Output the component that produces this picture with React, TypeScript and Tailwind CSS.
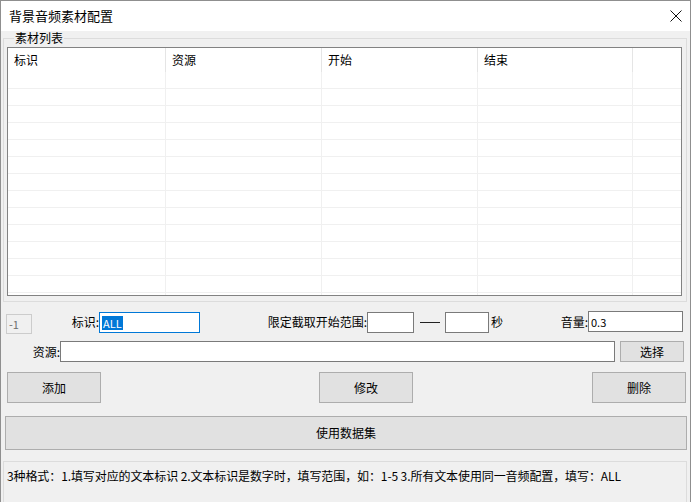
import React from "react";

const COLS = ["标识", "资源", "开始", "结束", ""];
const ROW_COUNT = 14;

function Btn({ label, className }: { label: string; className: string }) {
  return (
    <button
      type="button"
      className={`flex items-center justify-center border border-[#adadad] bg-[#e1e1e1] text-[12px] leading-[14px] text-black ${className}`}
    >
      {label}
    </button>
  );
}

function Box({ className, children }: { className: string; children?: React.ReactNode }) {
  return (
    <div className={`flex items-center border bg-white text-[11px] leading-[14px] ${className}`}>
      {children}
    </div>
  );
}

function MaterialTable() {
  return (
    <div className="mt-[2px] h-[249px] w-[675px] overflow-hidden border border-[#828282] bg-white">
      <div className="grid h-[24px] grid-cols-[158px_156px_156px_155px_1fr]">
        {COLS.map((c, i) => (
          <div
            key={i}
            className={`flex items-center pl-[6px] text-[12px] leading-[14px] ${i < 4 ? "border-r border-[#e5e5e5]" : ""}`}
          >
            {c}
          </div>
        ))}
      </div>
      {Array.from({ length: ROW_COUNT }).map((_, r) => (
        <div key={r} className="grid h-[17px] grid-cols-[158px_156px_156px_155px_1fr] border-b border-[#f0f0f0]">
          {COLS.map((_, i) => (
            <div key={i} className={i < 4 ? "border-r border-[#f0f0f0]" : ""} />
          ))}
        </div>
      ))}
    </div>
  );
}

export default function App() {
  return (
    <div className="flex h-[502px] w-[691px] flex-col overflow-hidden border-x border-t border-[#8f8f8f] font-['Noto_Sans_CJK_SC',sans-serif] text-black">
      {/* title bar */}
      <div className="flex h-[30px] shrink-0 items-center justify-between bg-white pl-[8px] pr-[8px]">
        <span className="text-[13px] leading-[16px]">背景音频素材配置</span>
        <svg width="12" height="12" viewBox="0 0 12 12">
          <path d="M0.5 0.5 L11.5 11.5 M11.5 0.5 L0.5 11.5" stroke="#111" strokeWidth="1" fill="none" />
        </svg>
      </div>

      <div className="flex flex-1 flex-col bg-[#f0f0f0]">
        {/* group box */}
        <fieldset className="ml-[2px] w-[684px] border border-[#dcdcdc] pb-[5px] pl-[3px]">
          <legend className="ml-[7px] px-[1px] text-[12px] leading-[14px]">素材列表</legend>
          <MaterialTable />
        </fieldset>

        {/* row 1 */}
        <div className="mt-[9px] flex h-[22px] items-start">
          <div className="ml-[5px] mt-[3px] flex h-[20px] w-[26px] items-center border border-[#cccccc] bg-[#f0f0f0] pl-[2px] text-[11px] leading-[14px] text-[#6d6d6d]">
            -1
          </div>
          <div className="flex h-[22px] w-[67px] items-center justify-end text-[12px] leading-[14px]">标识:</div>
          <Box className="mt-[1px] h-[21px] w-[101px] border-[#0078d7] pl-[2px]">
            <span className="bg-[#0078d7] px-[1px] text-white">ALL</span>
          </Box>
          <div className="flex h-[22px] w-[167px] items-center justify-end text-[12px] leading-[14px]">
            限定截取开始范围:
          </div>
          <Box className="mt-[1px] h-[21px] w-[47px] border-[#7a7a7a]" />
          <div className="flex h-[22px] w-[31px] items-center justify-center">
            <div className="h-[1px] w-[20px] bg-[#222]" />
          </div>
          <Box className="mt-[1px] h-[21px] w-[44px] border-[#7a7a7a]" />
          <div className="ml-[2px] flex h-[22px] items-center text-[12px] leading-[14px]">秒</div>
          <div className="flex h-[22px] w-[85px] items-center justify-end text-[12px] leading-[14px]">音量:</div>
          <Box className="h-[21px] w-[95px] border-[#7a7a7a] pl-[2px]">0.3</Box>
        </div>

        {/* row 2 */}
        <div className="mt-[8px] flex h-[21px] items-center">
          <div className="flex w-[59px] items-center justify-end text-[12px] leading-[14px]">资源:</div>
          <Box className="h-[21px] w-[555px] border-[#7a7a7a]" />
          <Btn label="选择" className="ml-[5px] h-[21px] w-[64px]" />
        </div>

        {/* row 3 */}
        <div className="mt-[10px] flex h-[31px]">
          <Btn label="添加" className="ml-[6px] h-[31px] w-[94px]" />
          <Btn label="修改" className="ml-[218px] h-[31px] w-[94px]" />
          <Btn label="删除" className="ml-[179px] h-[31px] w-[94px]" />
        </div>

        {/* row 4 */}
        <Btn label="使用数据集" className="ml-[4px] mt-[13px] h-[34px] w-[682px]" />

        {/* hint bar */}
        <div className="ml-[2px] mt-[11px] w-[684px] flex-1 border-x border-t border-[#dcdcdc] pl-[3px] pt-[7px] text-[12px] leading-[14px] tracking-[-0.1px]">
          3种格式：1.填写对应的文本标识 2.文本标识是数字时，填写范围，如：1-5 3.所有文本使用同一音频配置，填写：ALL
        </div>
      </div>
    </div>
  );
}
